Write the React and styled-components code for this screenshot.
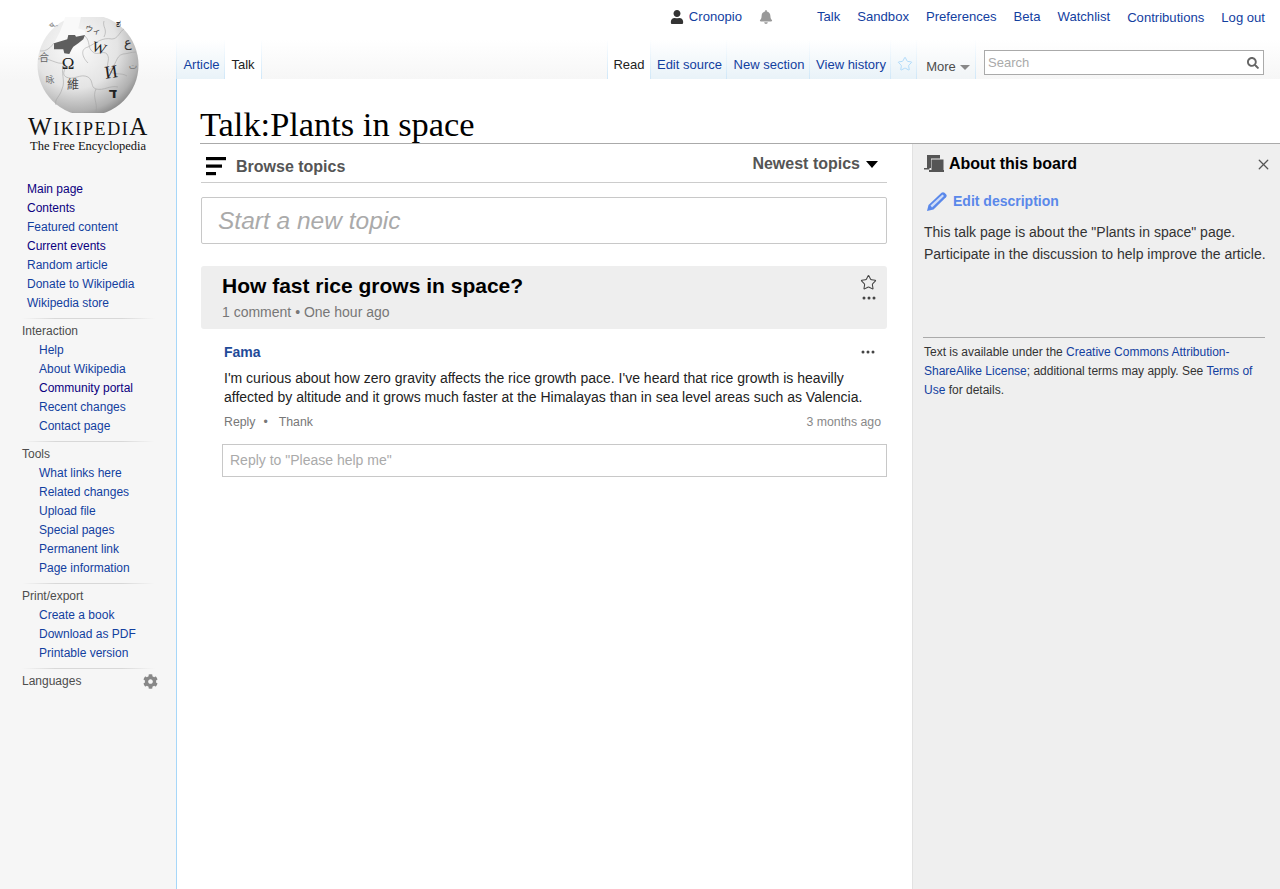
import React from 'react'
import styled, { createGlobalStyle } from 'styled-components'
import { FaUser, FaBell, FaSearch, FaCog } from 'react-icons/fa'
import { Star, X } from 'lucide-react'

const LINK = '#12409f'

const GlobalStyle = createGlobalStyle`
  html, body { margin: 0; padding: 0; height: 100%; }
  body { font-family: "Liberation Sans", Arial, sans-serif; background: #f6f6f6; }
  #root { min-height: 100%; }
`

const Page = styled.div`
  display: flex;
  height: 889px;
  overflow: hidden;
  background: linear-gradient(#fff 50%, #f6f6f6 100%) top / 100% 80px no-repeat, #f6f6f6;
`

/* sidebar */
const Sidebar = styled.aside`
  width: 176px;
  flex: none;
`
const Logo = styled.div`
  height: 180px;
  box-sizing: border-box;
  padding-top: 17px;
  display: flex;
  flex-direction: column;
  align-items: center;
  font-family: "Liberation Serif", "Times New Roman", serif;
  color: #111;
`
const Wordmark = styled.div`
  margin: 3px 0 0 1px;
  font-size: 25px;
  line-height: 22px;
  font-variant: small-caps;
  letter-spacing: 1.6px;
`
const Tagline = styled.div`
  font-size: 12.5px;
  line-height: 16px;
`
const NavList = styled.ul`
  list-style: none;
  margin: 0;
  padding: 0 0 0 ${(p) => p.$indent}px;
`
const NavItem = styled.li`
  font-size: 12px;
  line-height: 19px;
  color: ${(p) => (p.$visited ? '#0b0080' : LINK)};
`
const Section = styled.section`
  margin-top: 5px;
  &::before {
    content: '';
    display: block;
    height: 1px;
    margin: 0 21px 3px 22px;
    background: linear-gradient(to right, #f6f6f6, #d8d8d8 25%, #d8d8d8 75%, #f6f6f6);
  }
`
const SectionTitle = styled.div`
  display: flex;
  justify-content: space-between;
  align-items: center;
  padding: 0 18px 0 22px;
  font-size: 12px;
  line-height: 19px;
  color: #4d4d4d;
  svg { color: #888; font-size: 15px; }
`

/* header */
const Main = styled.main`
  flex: 1;
  min-width: 0;
  display: flex;
  flex-direction: column;
`
const UserBar = styled.div`
  height: 40px;
  box-sizing: border-box;
  padding: 9px 15px 0 0;
  display: flex;
  align-items: flex-start;
  justify-content: flex-end;
  gap: 17px;
  font-size: 13.1px;
  line-height: 15px;
`
const UserLink = styled.a`
  color: ${LINK};
  margin-top: ${(p) => (p.$low ? 1 : 0)}px;
`
const UserName = styled.span`
  display: flex;
  align-items: center;
  gap: 5px;
  color: ${LINK};
  svg { color: #333; font-size: 14px; }
`
const BellWrap = styled.span`
  display: flex;
  margin: 1px 27px 0 0;
  color: #999;
  font-size: 14px;
`
const TabRow = styled.nav`
  height: 40px;
  box-sizing: border-box;
  display: flex;
  border-bottom: 1px solid #a7d7f9;
`
const TabGroup = styled.div`
  display: flex;
  height: 40px;
  margin-left: ${(p) => (p.$push ? 'auto' : '0')};
  border-left: 1px solid;
  border-image: linear-gradient(to bottom, #fff, #cde6f8) 1;
`
const Tab = styled.a`
  display: flex;
  align-items: flex-end;
  justify-content: center;
  box-sizing: border-box;
  height: 40px;
  width: ${(p) => p.$w}px;
  padding: 0 0 7px ${(p) => (p.$active ? 0 : 2)}px;
  font-size: 13px;
  line-height: 16px;
  color: ${(p) => (p.$active ? '#222' : LINK)};
  background: ${(p) => (p.$active ? '#fff' : 'linear-gradient(to bottom, #fff, #e8f2f8)')};
  border-right: 1px solid;
  border-image: linear-gradient(to bottom, #fff, #cde6f8) 1;
`
const MoreTab = styled(Tab)`
  color: #4d4d4d;
  gap: 4px;
  padding: 0 0 5px 4px;
  background: linear-gradient(to bottom, #fff, #f0f4f6);
`
const Caret = styled.i`
  width: 0;
  height: 0;
  margin-bottom: ${(p) => p.$lift}px;
  border-left: ${(p) => p.$size}px solid transparent;
  border-right: ${(p) => p.$size}px solid transparent;
  border-top: ${(p) => p.$drop}px solid ${(p) => p.$color};
`
const SearchBox = styled.div`
  width: 280px;
  height: 25px;
  box-sizing: border-box;
  margin: 10px 16px 0 8px;
  padding: 0 4px 0 3px;
  display: flex;
  align-items: center;
  justify-content: space-between;
  background: #fff;
  border: 1px solid #aaa;
  font-size: 13px;
  color: #aaa;
  svg { color: #666; font-size: 12px; }
`

/* content */
const Content = styled.div`
  flex: 1;
  background: #fff;
  border-left: 1px solid #a7d7f9;
  margin-top: -1px;
  padding-top: 1px;
  display: flex;
  flex-direction: column;
  min-height: 0;
`
const Title = styled.h1`
  margin: 0 0 0 23px;
  height: 64px;
  box-sizing: border-box;
  padding-top: 23px;
  border-bottom: 1px solid #aaa;
  font-family: "Liberation Serif", Georgia, serif;
  font-weight: 400;
  font-size: 34.4px;
  line-height: 42px;
  color: #000;
`
const Board = styled.div`
  flex: 1;
  display: flex;
  min-height: 0;
`
const Topics = styled.div`
  flex: 1;
  min-width: 0;
  padding: 0 25px 0 24px;
`
const TopicsBar = styled.div`
  height: 38px;
  display: flex;
  align-items: center;
  justify-content: space-between;
  border-bottom: 1px solid #ccc;
  font-size: 16px;
  font-weight: 700;
  color: #555;
`
const BrowseLink = styled.div`
  display: flex;
  align-items: center;
  gap: 9px;
  margin: 8px 0 0 5px;
  svg { margin-top: -2px; }
`
const SortLink = styled.div`
  display: flex;
  align-items: center;
  gap: 6px;
  padding: 2px 9px 0 0;
`
const NewTopic = styled.div`
  margin-top: 14px;
  height: 47px;
  box-sizing: border-box;
  padding-left: 16px;
  display: flex;
  align-items: center;
  border: 1px solid #c8c8c8;
  border-radius: 2px;
  font-size: 24.5px;
  font-style: italic;
  color: #aaa;
`
const TopicHead = styled.div`
  margin-top: 22px;
  height: 63px;
  box-sizing: border-box;
  padding: 9px 10px 8px 21px;
  display: flex;
  justify-content: space-between;
  background: #eee;
  border-radius: 3px;
`
const TopicTitle = styled.h2`
  margin: 0;
  font-size: 21px;
  line-height: 22px;
  font-weight: 700;
  color: #000;
`
const TopicMeta = styled.div`
  margin-top: 6px;
  font-size: 14px;
  line-height: 18px;
  color: #777;
`
const TopicActions = styled.div`
  display: flex;
  flex-direction: column;
  align-items: center;
  gap: 5px;
  margin-top: -1px;
  color: #444;
`
const Post = styled.article`
  margin: 13px 0 0 21px;
`
const PostHead = styled.div`
  display: flex;
  justify-content: space-between;
  align-items: center;
  padding: 0 12px 0 2px;
`
const Author = styled.a`
  font-size: 14px;
  line-height: 20px;
  font-weight: 700;
  color: #1f4b99;
`
const PostText = styled.p`
  margin: 7px 0 0;
  padding-left: 2px;
  font-size: 14px;
  line-height: 19px;
  color: #222;
`
const PostFoot = styled.div`
  margin-top: 6px;
  padding: 0 6px 0 2px;
  display: flex;
  gap: 8px;
  font-size: 12.3px;
  line-height: 18px;
  color: #777;
`
const FootDot = styled.span`
  margin-right: 3px;
`
const PostDate = styled.span`
  margin-left: auto;
  color: #888;
`
const ReplyBox = styled.div`
  margin-top: 13px;
  height: 33px;
  box-sizing: border-box;
  padding: 0 0 2px 7px;
  display: flex;
  align-items: center;
  border: 1px solid #c8c8c8;
  font-size: 14px;
  color: #aaa;
`

/* about panel */
const Panel = styled.aside`
  width: 368px;
  flex: none;
  box-sizing: border-box;
  padding: 0 15px 0 11px;
  background: #efefef;
  border-left: 1px solid #e2e2e2;
`
const PanelHead = styled.div`
  height: 39px;
  display: flex;
  align-items: center;
  gap: 5px;
  font-size: 16px;
  font-weight: 700;
  color: #000;
  svg:last-child { margin: 1px -7px 0 auto; color: #555; }
`
const EditRow = styled.a`
  margin-top: 6px;
  height: 24px;
  display: flex;
  align-items: center;
  gap: 6px;
  font-size: 14px;
  font-weight: 700;
  color: #5a88ea;
  svg { margin-left: 3px; }
`
const PanelText = styled.p`
  margin: 8px 0 0;
  font-size: 14px;
  line-height: 22px;
  color: #333;
  white-space: nowrap;
`
const PanelRule = styled.hr`
  margin: 72px 0 0 -1px;
  border: 0;
  height: 1px;
  background: #aaa;
`
const PanelFoot = styled.p`
  margin: 5px 0 0;
  font-size: 12px;
  line-height: 19px;
  color: #333;
  white-space: nowrap;
  a { color: ${LINK}; }
`

const Globe = () => (
  <svg width="104" height="96" viewBox="0 0 104 96">
    <defs>
      <radialGradient id="globeFill" cx="38%" cy="32%" r="75%">
        <stop offset="0" stopColor="#fbfbfb" />
        <stop offset="0.55" stopColor="#e4e4e4" />
        <stop offset="0.85" stopColor="#b0b0b0" />
        <stop offset="1" stopColor="#7e7e7e" />
      </radialGradient>
    </defs>
    <circle cx="52" cy="48" r="50.5" fill="url(#globeFill)" />
    <g fill="none" stroke="#9d9d9d" strokeWidth="0.7" opacity="0.75">
      <path d="M2 42c12-2 18 6 26 4 4 6-4 10 2 14 8 4 14-4 22 0 6 4 2 10 8 12 8 2 14-4 22-2" />
      <path d="M49 19c6 6 2 12 8 16 4 4 10-2 14 2 4 6-2 10 2 16 4 6 12 2 18 6" />
      <path d="M28 46c-4 10 2 18-2 26-2 8-8 10-6 16" />
      <path d="M52 46c-6-6-8-14 0-16 8-4 14-10 24-8 6 0 8-8 12-10" />
      <path d="M60 72c-4 8 2 14 0 23" />
      <path d="M73 53c8-4 6-14 14-16 4 0 8-2 13-2" />
      <path d="M18 26c-6 8-10 8-14 8" />
      <path d="M68 4c-2 6 4 8 0 16" />
    </g>
    <polygon
      points="29,0 45,0 42.3,11.3 49,13.7 49,18 40,19.700 39,18 32.300,18 31.300,22.300 18,26.300 23.300,16.300 27.300,6.300"
      fill="#f9f9f9"
    />
    <polygon
      points="18,26.300 31.300,22.300 32.300,18 39,18 40,19.700 49,18 47.300,22.300 42.300,26.300 37.300,29.700 35.700,32.300 33.300,37 28.300,36.300 27.300,32.300 18,32.300"
      fill="#5e5e5e"
    />
    <g fontFamily="'Liberation Serif', serif" fill="#222" textAnchor="middle">
      <text x="32" y="52" fontSize="17">Ω</text>
      <text x="63" y="36" fontSize="15" transform="rotate(18 63 32)">W</text>
      <text x="75" y="61" fontSize="18" transform="rotate(-8 75 55)">И</text>
      <text x="77" y="81" fontSize="15" fontWeight="700" fontFamily="'DejaVu Sans', sans-serif">ד</text>
      <text x="37" y="72" fontSize="12" fontFamily="'Noto Sans CJK TC', sans-serif" fill="#444">維</text>
      <text x="57" y="16" fontSize="8" transform="rotate(15 57 13)" fontFamily="'Noto Sans CJK JP', sans-serif" fill="#444">ウィ</text>
      <text x="92" y="30" fontSize="13" fontFamily="'DejaVu Sans', sans-serif" fill="#333">ع</text>
      <text x="82" y="10" fontSize="9" fontFamily="'Noto Sans CJK SC', sans-serif" fill="#333">ಶ</text>
      <text x="8" y="44" fontSize="10" fontFamily="'Noto Sans CJK SC', sans-serif" fill="#666">合</text>
      <text x="14" y="66" fontSize="9" fontFamily="'Noto Sans CJK SC', sans-serif" fill="#777">咏</text>
      <text x="97" y="52" fontSize="9" fontFamily="'DejaVu Sans', sans-serif" fill="#777">ت</text>
      <text x="18" y="10" fontSize="8" fontFamily="'DejaVu Sans', sans-serif" fill="#888" transform="rotate(-40 18 10)">ष्</text>
    </g>
  </svg>
)

const BrowseIcon = () => (
  <svg width="21" height="19" viewBox="0 0 21 19">
    <rect x="0" y="0" width="20" height="3.200" fill="#000" />
    <rect x="0" y="7.500" width="16" height="3.200" fill="#000" />
    <rect x="0" y="15" width="10" height="3.200" fill="#000" />
  </svg>
)

const BoardIcon = () => (
  <svg width="20" height="17" viewBox="0 0 20 17">
    <path d="M3 0h13v3.500H7V13H5.500v1.500H0V13h3z" fill="#555" />
    <rect x="7.500" y="4.500" width="12" height="12" fill="#555" />
    <rect x="5" y="15" width="15" height="2" fill="#555" />
  </svg>
)

const PencilIcon = () => (
  <svg width="20" height="19" viewBox="0 0 20 19">
    <path d="M0 19l1.500-6L14.500.8c1-.9 2-.9 3 0l1.500 1.500c.9 1 .9 2 0 3L6.500 17.500z" fill="#5a88ea" />
    <path d="M3.500 13.500L15.500 2.500l1.500 1.500L5 15.500z" fill="#cfdcf7" />
  </svg>
)

const Dots = () => (
  <svg width="14" height="4" viewBox="0 0 14 4">
    <circle cx="2" cy="2" r="1.500" fill="#444" />
    <circle cx="7" cy="2" r="1.500" fill="#444" />
    <circle cx="12" cy="2" r="1.500" fill="#444" />
  </svg>
)

const mainNav = [
  ['Main page', true],
  ['Contents', true],
  ['Featured content'],
  ['Current events', true],
  ['Random article'],
  ['Donate to Wikipedia'],
  ['Wikipedia store'],
]

const navSections = [
  {
    title: 'Interaction',
    items: [['Help'], ['About Wikipedia'], ['Community portal', true], ['Recent changes'], ['Contact page']],
  },
  {
    title: 'Tools',
    items: [['What links here'], ['Related changes'], ['Upload file'], ['Special pages'], ['Permanent link'], ['Page information']],
  },
  {
    title: 'Print/export',
    items: [['Create a book'], ['Download as PDF'], ['Printable version']],
  },
]

const userLinks = [['Talk'], ['Sandbox'], ['Preferences'], ['Beta'], ['Watchlist'], ['Contributions', true], ['Log out', true]]

const App = () => {
  return (
    <Page>
      <GlobalStyle />
      <Sidebar>
        <Logo>
          <Globe />
          <Wordmark>WikipediA</Wordmark>
          <Tagline>The Free Encyclopedia</Tagline>
        </Logo>
        <NavList $indent={27}>
          {mainNav.map(([label, visited]) => (
            <NavItem key={label} $visited={visited}>{label}</NavItem>
          ))}
        </NavList>
        {navSections.map((section) => (
          <Section key={section.title}>
            <SectionTitle>{section.title}</SectionTitle>
            <NavList $indent={39}>
              {section.items.map(([label, visited]) => (
                <NavItem key={label} $visited={visited}>{label}</NavItem>
              ))}
            </NavList>
          </Section>
        ))}
        <Section>
          <SectionTitle>
            Languages
            <FaCog />
          </SectionTitle>
        </Section>
      </Sidebar>

      <Main>
        <UserBar>
          <UserName><FaUser />Cronopio</UserName>
          <BellWrap><FaBell /></BellWrap>
          {userLinks.map(([label, low]) => (
            <UserLink key={label} $low={low}>{label}</UserLink>
          ))}
        </UserBar>
        <TabRow>
          <TabGroup>
            <Tab $w={48}>Article</Tab>
            <Tab $w={37} $active>Talk</Tab>
          </TabGroup>
          <TabGroup $push>
            <Tab $w={43} $active>Read</Tab>
            <Tab $w={76}>Edit source</Tab>
            <Tab $w={83}>New section</Tab>
            <Tab $w={81}>View history</Tab>
            <Tab $w={26}><Star size={16} color="#a7d7f9" strokeWidth={1.3} style={{ marginBottom: 1 }} /></Tab>
            <MoreTab $w={59}>More<Caret $color="#888" $size={5} $drop={5} $lift={5} /></MoreTab>
          </TabGroup>
          <SearchBox>
            Search
            <FaSearch />
          </SearchBox>
        </TabRow>
        <Content>
          <Title>Talk:Plants in space</Title>
          <Board>
            <Topics>
              <TopicsBar>
                <BrowseLink><BrowseIcon />Browse topics</BrowseLink>
                <SortLink>Newest topics<Caret $color="#000" $size={6} $drop={7} $lift={0} /></SortLink>
              </TopicsBar>
              <NewTopic>Start a new topic</NewTopic>
              <TopicHead>
                <div>
                  <TopicTitle>How fast rice grows in space?</TopicTitle>
                  <TopicMeta>1 comment • One hour ago</TopicMeta>
                </div>
                <TopicActions>
                  <Star size={17} strokeWidth={1.5} />
                  <Dots />
                </TopicActions>
              </TopicHead>
              <Post>
                <PostHead>
                  <Author>Fama</Author>
                  <Dots />
                </PostHead>
                <PostText>
                  I'm curious about how zero gravity affects the rice growth pace. I've heard that rice growth is heavilly
                  <br />
                  affected by altitude and it grows much faster at the Himalayas than in sea level areas such as Valencia.
                </PostText>
                <PostFoot>
                  <span>Reply</span>
                  <FootDot>•</FootDot>
                  <span>Thank</span>
                  <PostDate>3 months ago</PostDate>
                </PostFoot>
                <ReplyBox>Reply to "Please help me"</ReplyBox>
              </Post>
            </Topics>
            <Panel>
              <PanelHead>
                <BoardIcon />
                About this board
                <X size={17} strokeWidth={1.8} />
              </PanelHead>
              <EditRow><PencilIcon />Edit description</EditRow>
              <PanelText>
                This talk page is about the "Plants in space" page.
                <br />
                Participate in the discussion to help improve the article.
              </PanelText>
              <PanelRule />
              <PanelFoot>
                Text is available under the <a>Creative Commons Attribution-</a>
                <br />
                <a>ShareAlike License</a>; additional terms may apply. See <a>Terms of</a>
                <br />
                <a>Use</a> for details.
              </PanelFoot>
            </Panel>
          </Board>
        </Content>
      </Main>
    </Page>
  )
}

export default App
